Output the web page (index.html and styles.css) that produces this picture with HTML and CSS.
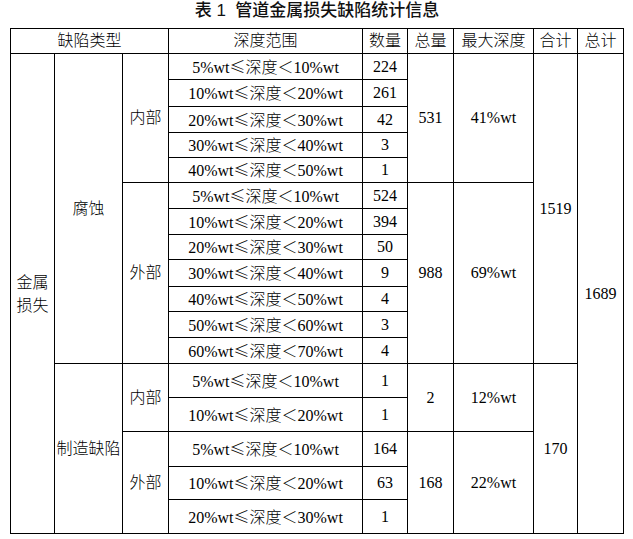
FILE: index.html
```html
<!DOCTYPE html>
<html lang="zh-CN">
<head>
<meta charset="utf-8">
<title>管道金属损失缺陷统计信息</title>
<link rel="stylesheet" href="styles.css">
</head>
<body>
<div class="page">
  <h1 class="title">表 1&nbsp;&nbsp;管道金属损失缺陷统计信息</h1>
  <table class="stats">
    <colgroup>
      <col class="c-a"><col class="c-b"><col class="c-c"><col class="c-d"><col class="c-e"><col class="c-f"><col class="c-g"><col class="c-h"><col class="c-i">
    </colgroup>
    <thead>
      <tr class="r25"><th colspan="3">缺陷类型</th><th>深度范围</th><th>数量</th><th>总量</th><th>最大深度</th><th>合计</th><th>总计</th></tr>
    </thead>
    <tbody>
      <tr class="r26"><td rowspan="17" class="narrow">金属<br>损失</td><td rowspan="12">腐蚀</td><td rowspan="5">内部</td><td>5%wt<span class="le">≤</span>深度＜10%wt</td><td>224</td><td rowspan="5">531</td><td rowspan="5">41%wt</td><td rowspan="12">1519</td><td rowspan="17">1689</td></tr>
      <tr class="r27"><td>10%wt<span class="le">≤</span>深度＜20%wt</td><td>261</td></tr>
      <tr class="r26"><td>20%wt<span class="le">≤</span>深度＜30%wt</td><td>42</td></tr>
      <tr class="r25"><td>30%wt<span class="le">≤</span>深度＜40%wt</td><td>3</td></tr>
      <tr class="r25"><td>40%wt<span class="le">≤</span>深度＜50%wt</td><td>1</td></tr>
      <tr class="r26"><td rowspan="7">外部</td><td>5%wt<span class="le">≤</span>深度＜10%wt</td><td>524</td><td rowspan="7">988</td><td rowspan="7">69%wt</td></tr>
      <tr class="r26"><td>10%wt<span class="le">≤</span>深度＜20%wt</td><td>394</td></tr>
      <tr class="r25"><td>20%wt<span class="le">≤</span>深度＜30%wt</td><td>50</td></tr>
      <tr class="r27"><td>30%wt<span class="le">≤</span>深度＜40%wt</td><td>9</td></tr>
      <tr class="r25"><td>40%wt<span class="le">≤</span>深度＜50%wt</td><td>4</td></tr>
      <tr class="r26"><td>50%wt<span class="le">≤</span>深度＜60%wt</td><td>3</td></tr>
      <tr class="r26"><td>60%wt<span class="le">≤</span>深度＜70%wt</td><td>4</td></tr>
      <tr class="r34"><td rowspan="5">制造缺陷</td><td rowspan="2">内部</td><td>5%wt<span class="le">≤</span>深度＜10%wt</td><td>1</td><td rowspan="2">2</td><td rowspan="2">12%wt</td><td rowspan="5">170</td></tr>
      <tr class="r34"><td>10%wt<span class="le">≤</span>深度＜20%wt</td><td>1</td></tr>
      <tr class="r35"><td rowspan="3">外部</td><td>5%wt<span class="le">≤</span>深度＜10%wt</td><td>164</td><td rowspan="3">168</td><td rowspan="3">22%wt</td></tr>
      <tr class="r33"><td>10%wt<span class="le">≤</span>深度＜20%wt</td><td>63</td></tr>
      <tr class="r34"><td>20%wt<span class="le">≤</span>深度＜30%wt</td><td>1</td></tr>
    </tbody>
  </table>
</div>
</body>
</html>
```

FILE: styles.css
```css
html, body {
  margin: 0;
  padding: 0;
  background: #ffffff;
}

.page {
  padding: 0 10px;
  width: 614px;
}

.title {
  margin: 0 0 6px 0;
  height: 22px;
  line-height: 22px;
  text-align: center;
  font-family: "Liberation Sans", Arial, "Noto Sans CJK SC", sans-serif;
  font-size: 17px;
  font-weight: 500;
  color: #111111;
}

.stats {
  width: 614px;
  table-layout: fixed;
  border-collapse: collapse;
  font-family: "Liberation Serif", "Noto Sans CJK SC", serif;
  font-size: 16px;
  font-weight: 300;
  color: #000000;
}

.stats th,
.stats td {
  border: 1px solid #000000;
  padding: 0;
  text-align: center;
  vertical-align: middle;
  font-weight: 300;
  white-space: nowrap;
  line-height: 20px;
}

.stats .narrow {
  line-height: 23px;
}

.le {
  font-family: "Noto Sans CJK SC", sans-serif;
  font-size: 16px;
}

.c-a { width: 44px; }
.c-b { width: 68px; }
.c-c { width: 46px; }
.c-d { width: 194px; }
.c-e { width: 45px; }
.c-f { width: 46px; }
.c-g { width: 80px; }
.c-h { width: 44px; }
.c-i { width: 46px; }

.r25 { height: 25px; }
.r26 { height: 26px; }
.r27 { height: 27px; }
.r33 { height: 33px; }
.r34 { height: 34px; }
.r35 { height: 35px; }
```
